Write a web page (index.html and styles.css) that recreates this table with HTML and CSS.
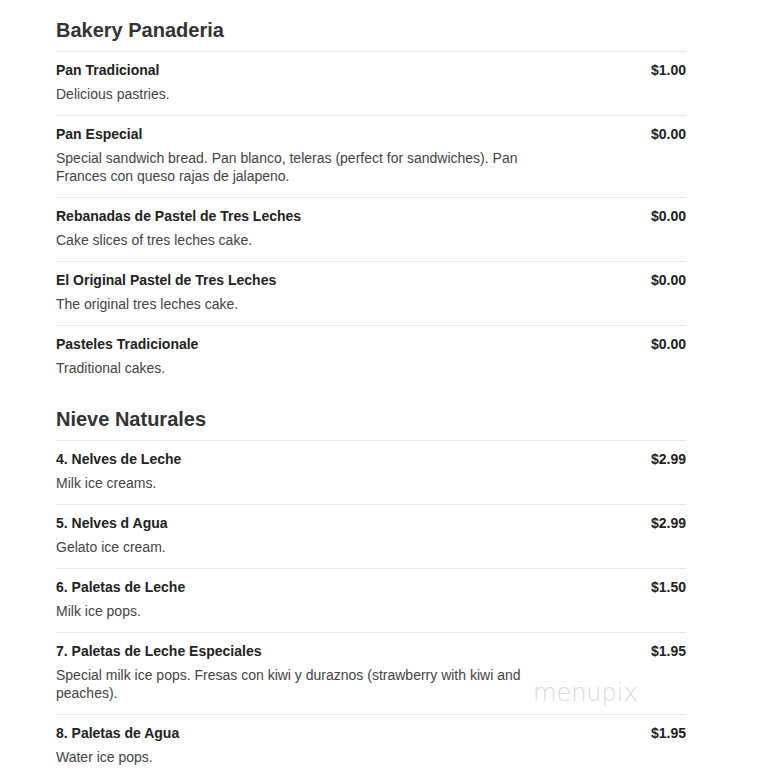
FILE: index.html
```html
<!DOCTYPE html>
<html>
<head>
<meta charset="utf-8">
<link rel="stylesheet" href="styles.css">
</head>
<body>
<div class="menu">
  <section class="section">
    <h2 class="section-title">Bakery Panaderia</h2>
    <div class="item">
      <div class="info"><div class="name">Pan Tradicional</div><div class="desc">Delicious pastries.</div></div>
      <div class="price">$1.00</div>
    </div>
    <div class="item">
      <div class="info"><div class="name">Pan Especial</div><div class="desc">Special sandwich bread. Pan blanco, teleras (perfect for sandwiches). Pan Frances con queso rajas de jalapeno.</div></div>
      <div class="price">$0.00</div>
    </div>
    <div class="item">
      <div class="info"><div class="name">Rebanadas de Pastel de Tres Leches</div><div class="desc">Cake slices of tres leches cake.</div></div>
      <div class="price">$0.00</div>
    </div>
    <div class="item">
      <div class="info"><div class="name">El Original Pastel de Tres Leches</div><div class="desc">The original tres leches cake.</div></div>
      <div class="price">$0.00</div>
    </div>
    <div class="item">
      <div class="info"><div class="name">Pasteles Tradicionale</div><div class="desc">Traditional cakes.</div></div>
      <div class="price">$0.00</div>
    </div>
  </section>
  <section class="section">
    <h2 class="section-title">Nieve Naturales</h2>
    <div class="item">
      <div class="info"><div class="name">4. Nelves de Leche</div><div class="desc">Milk ice creams.</div></div>
      <div class="price">$2.99</div>
    </div>
    <div class="item">
      <div class="info"><div class="name">5. Nelves d Agua</div><div class="desc">Gelato ice cream.</div></div>
      <div class="price">$2.99</div>
    </div>
    <div class="item">
      <div class="info"><div class="name">6. Paletas de Leche</div><div class="desc">Milk ice pops.</div></div>
      <div class="price">$1.50</div>
    </div>
    <div class="item">
      <div class="info"><div class="name">7. Paletas de Leche Especiales</div><div class="desc">Special milk ice pops. Fresas con kiwi y duraznos (strawberry with kiwi and peaches).</div></div>
      <div class="price">$1.95</div>
      <div class="watermark">menupix</div>
    </div>
    <div class="item">
      <div class="info"><div class="name">8. Paletas de Agua</div><div class="desc">Water ice pops.</div></div>
      <div class="price">$1.95</div>
    </div>
  </section>
</div>
</body>
</html>
```
FILE: styles.css
```css
html, body {
  margin: 0;
  padding: 0;
  background: #fff;
}
body {
  font-family: "Liberation Sans", Arial, sans-serif;
  color: #333;
}
.menu {
  width: 630px;
  margin-left: 56px;
  padding-top: 18px;
}
.section {
  margin-bottom: 18px;
}
.section-title {
  margin: 0;
  font-size: 20px;
  line-height: 24px;
  font-weight: bold;
  color: #333;
  padding-bottom: 9px;
}
.item {
  position: relative;
  display: flex;
  justify-content: space-between;
  border-top: 1px solid #e6e6e6;
  padding: 9px 0 12px;
}
.info {
  width: 470px;
}
.name {
  font-size: 14px;
  line-height: 18px;
  font-weight: bold;
  color: #222;
}
.desc {
  margin-top: 6px;
  font-size: 14px;
  line-height: 18px;
  color: #444;
}
.price {
  font-size: 14px;
  line-height: 18px;
  font-weight: bold;
  color: #222;
}
.watermark {
  position: absolute;
  left: 477px;
  top: 46px;
  font-family: "DejaVu Sans", sans-serif;
  font-weight: 200;
  font-size: 24px;
  color: #dadada;
}
```
